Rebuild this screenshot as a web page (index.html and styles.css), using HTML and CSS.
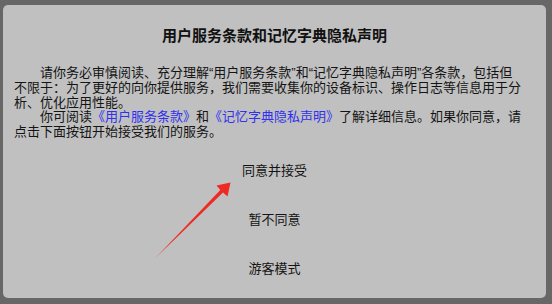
FILE: index.html
```html
<!DOCTYPE html>
<html lang="zh-CN">
<head>
<meta charset="utf-8">
<title>用户服务条款和记忆字典隐私声明</title>
<link rel="stylesheet" href="styles.css">
</head>
<body>
<div class="dialog">
  <h1 class="title">用户服务条款和记忆字典隐私声明</h1>
  <div class="content">
    <p class="para">请你务必审慎阅读、充分理解“用户服务条款”和“记忆字典隐私声明”各条款，包括但不限于：为了更好的向你提供服务，我们需要收集你的设备标识、操作日志等信息用于分析、优化应用性能。</p>
    <p class="para">你可阅读<a class="link" href="#">《用户服务条款》</a>和<a class="link" href="#">《记忆字典隐私声明》</a>了解详细信息。如果你同意，请点击下面按钮开始接受我们的服务。</p>
  </div>
  <div class="actions">
    <div class="btn">同意并接受</div>
    <div class="btn">暂不同意</div>
    <div class="btn">游客模式</div>
  </div>
</div>
<svg class="arrow" width="552" height="304" viewBox="0 0 552 304" aria-hidden="true">
  <polygon points="230.5,182.5 216.5,185.5 220.3,189.9 155,258.5 223,192.5 227.5,196.5" fill="#ee2a22"/>
</svg>
</body>
</html>
```

FILE: styles.css
```css
html, body {
  margin: 0;
  padding: 0;
}
body {
  width: 552px;
  height: 304px;
  background: #676767;
  padding: 5px 6px 6px 3px;
  box-sizing: border-box;
  font-family: "Liberation Sans", "Noto Sans CJK SC", sans-serif;
  color: #141414;
  overflow: hidden;
  position: relative;
}
.dialog {
  height: 293px;
  background: #c0c0c0;
  border-radius: 5px;
  box-sizing: border-box;
  padding-top: 21px;
  display: flex;
  flex-direction: column;
}
.title {
  margin: 0;
  font-size: 15px;
  line-height: 20px;
  font-weight: bold;
  text-align: center;
  color: #111;
}
.content {
  margin-top: 20px;
  padding: 0 22px 0 11px;
}
.para {
  margin: 0;
  font-size: 13px;
  line-height: 14.8px;
  text-indent: 26px;
}
.link {
  display: inline-block;
  text-indent: 0;
  color: #3030ee;
  text-decoration: none;
}
.actions {
  margin-top: 5px;
  display: flex;
  flex-direction: column;
}
.btn {
  height: 49px;
  display: flex;
  align-items: center;
  justify-content: center;
  font-size: 13px;
  color: #141414;
}
.arrow {
  position: absolute;
  left: 0;
  top: 0;
}
```
